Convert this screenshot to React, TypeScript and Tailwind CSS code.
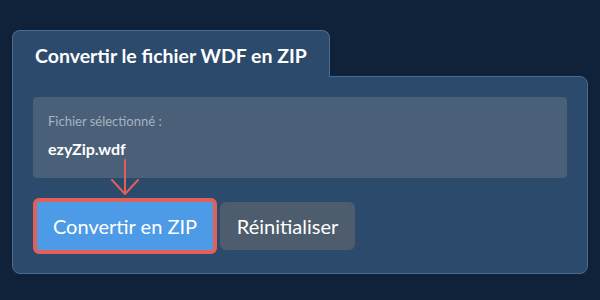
import React from 'react';

export default function App() {
  return (
    <div
      className="w-[600px] h-[300px] bg-[#10223a] px-3 pt-[30px]"
      style={{ fontFamily: 'Lato, "Noto Sans", sans-serif' }}
    >
      {/* 탭 */}
      <div className="relative z-10 -mb-px w-[318px] h-[47px] bg-[#2c4a6b] border-x border-t border-[#4b6a8c] rounded-t-lg pl-[22px] pt-[13px]">
        <h2 className="text-[19.5px] leading-[24px] font-bold text-white">
          Convertir le fichier WDF en ZIP
        </h2>
      </div>

      {/* 본문 */}
      <div className="bg-[#2c4a6b] border border-[#4b6a8c] rounded-b-lg rounded-tr-lg p-5 pb-[19px]">
        <div className="bg-[#4a6078] rounded p-[15px] pb-[17px]">
          <div className="text-[13px] leading-[19.5px] text-[#a7b3c1]">
            Fichier sélectionné :
          </div>
          <div className="mt-[5px] text-[16px] leading-[24px] font-bold text-white">
            ezyZip.wdf
          </div>
        </div>

        <div className="mt-[20px] flex items-center">
          <div className="relative">
            <svg
              className="absolute left-[77px] top-[-40px]"
              width="30"
              height="40"
              viewBox="0 0 30 40"
              fill="none"
              stroke="#e0605c"
              strokeWidth="2"
              strokeLinecap="round"
              strokeLinejoin="round"
            >
              <path d="M15 2 L15 36" />
              <path d="M2 22 L15 36 L28 22" />
            </svg>
            <button className="h-14 w-[184px] bg-[#4d9be6] border-4 border-[#e0605c] rounded-md text-[20px] text-white">
              Convertir en ZIP
            </button>
          </div>
          <button className="ml-[3px] h-12 w-[135px] bg-[#4d5d6e] rounded-md text-[20px] text-white">
            Réinitialiser
          </button>
        </div>
      </div>
    </div>
  );
}
